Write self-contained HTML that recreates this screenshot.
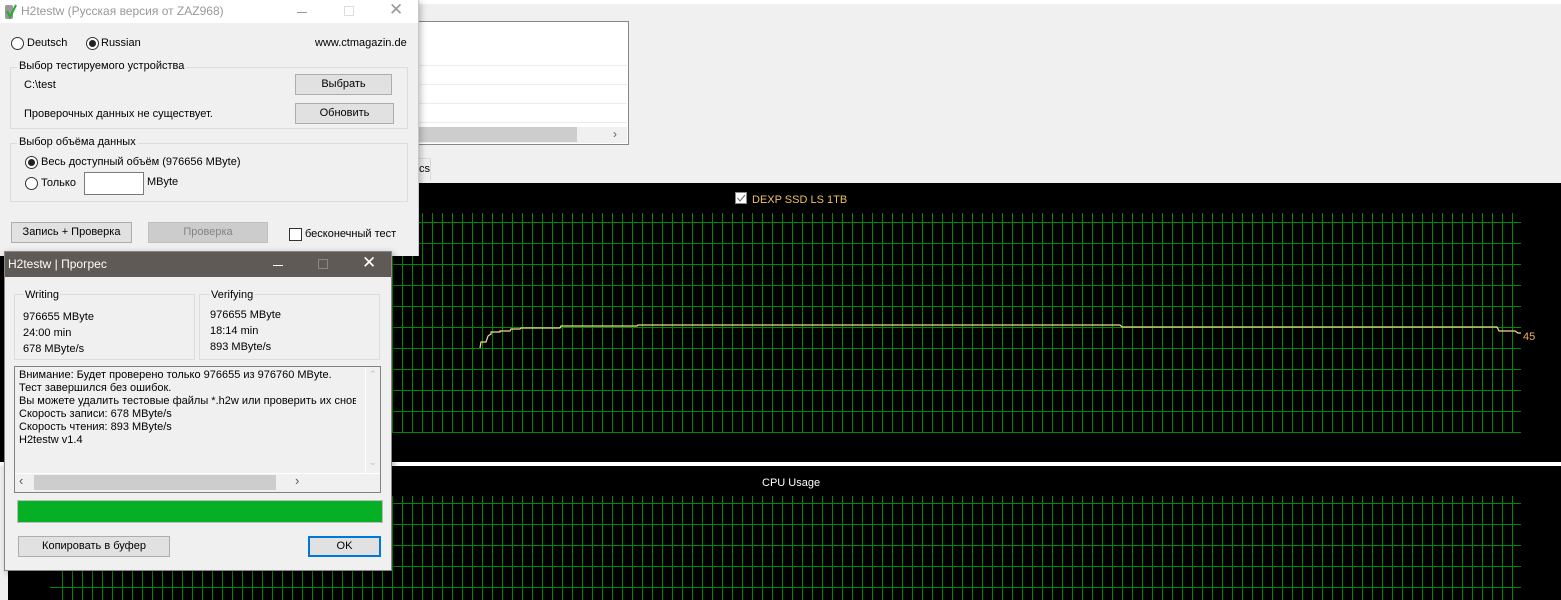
<!DOCTYPE html>
<html><head><meta charset="utf-8"><style>
*{box-sizing:border-box;margin:0;padding:0}
body{width:1561px;height:600px;overflow:hidden;position:relative;background:#f0f0f0;font-family:"Liberation Sans","DejaVu Sans",sans-serif;font-size:11px;color:#000}
.a{position:absolute}
.btn{position:absolute;background:#e1e1e1;border:1px solid #adadad;text-align:center;font-size:11px}
.grp{position:absolute;border:1px solid #dcdcdc}
.grp .t{position:absolute;top:-8px;left:6px;background:#f0f0f0;padding:0 2px}
.rad{position:absolute;width:13px;height:13px;border:1px solid #333;border-radius:50%;background:#fff}
.rad.on::after{content:"";position:absolute;left:2px;top:2px;width:7px;height:7px;border-radius:50%;background:#222}
</style></head><body>
<div class="a" style="left:0;top:0;width:1561px;height:4px;background:#fff"></div>
<!-- listbox -->
<div class="a" style="left:400px;top:21px;width:229px;height:124px;background:#fff;border:1px solid #828790"></div>
<div class="a" style="left:400px;top:65px;width:227px;height:1px;background:#ececec"></div>
<div class="a" style="left:400px;top:84px;width:227px;height:1px;background:#ececec"></div>
<div class="a" style="left:400px;top:103px;width:227px;height:1px;background:#ececec"></div>
<div class="a" style="left:400px;top:122px;width:227px;height:1px;background:#ececec"></div>
<div class="a" style="left:400px;top:127px;width:227px;height:16px;background:#f0f0f0"></div>
<div class="a" style="left:400px;top:127px;width:177px;height:15px;background:#cdcdcd"></div>
<div class="a" style="left:613px;top:127px;color:#606060;font-size:12px">&#8250;</div>
<div class="a" style="left:400px;top:158px;width:31px;height:22px;border:1px solid #d9d9d9;border-bottom:none;background:#f0f0f0;padding:4px 0 0 18px">cs</div>
<!-- charts -->
<div class="a" style="left:0;top:183px;width:1561px;height:279px;background:#000"></div>
<div class="a" style="left:0;top:462px;width:1561px;height:4px;background:#fff"></div>
<div class="a" style="left:8px;top:466px;width:1553px;height:134px;background:#000"></div>
<svg class="a" style="left:0;top:0" width="1561" height="600" shape-rendering="crispEdges">
<defs>
<pattern id="v" x="2" y="0" width="10" height="600" patternUnits="userSpaceOnUse"><rect x="0" y="0" width="1" height="600" fill="#008a00"/></pattern>
<pattern id="h1" x="0" y="222" width="1561" height="21" patternUnits="userSpaceOnUse"><rect x="0" y="0" width="1561" height="1" fill="#008a00"/></pattern>
</defs>
<rect x="61" y="213" width="1453" height="220" fill="url(#v)"/>
<rect x="50" y="222" width="1471" height="212" fill="url(#h1)"/>
<rect x="61" y="496" width="1453" height="104" fill="url(#v)"/>
<g fill="#008a00"><rect x="50" y="503" width="1471" height="1"/><rect x="50" y="524" width="1471" height="1"/><rect x="50" y="545" width="1471" height="1"/><rect x="50" y="566" width="1471" height="1"/><rect x="50" y="587" width="1471" height="1"/></g>
<polyline shape-rendering="auto" fill="none" stroke="#ffd890" stroke-width="1.2" points="480,348 481,342 486,342 488,336 491,334 491,332 500,332 500,331 510,331 511,329 520,329 521,328 560,328 561,326 637,326 638,325 1120,325 1122,327 1497,327 1499,331 1515,331 1518,333 1521,333"/>
<text x="1523" y="340" fill="#f0b050" font-family="Liberation Sans" font-size="11">45</text>
<rect x="735.5" y="192.5" width="11" height="11" fill="#fff" stroke="#888"/>
<path shape-rendering="auto" d="M737.5 198 l2.5 3 l5 -6" stroke="#666" fill="none"/>
<text x="752" y="203" fill="#f0c060" font-family="Liberation Sans" font-size="11">DEXP SSD LS 1TB</text>
<text x="762" y="486" fill="#fff" font-family="Liberation Sans" font-size="11">CPU Usage</text>
</svg>
<!-- main dialog -->
<div class="a" style="left:0;top:0;width:419px;height:256px;background:#f0f0f0;border-right:1px solid #c8c8c8;box-shadow:2px 2px 6px rgba(0,0,0,.25)">
<div class="a" style="left:0;top:0;width:418px;height:23px;background:#fff"></div>
<svg class="a" style="left:4px;top:3px" width="14" height="17"><rect x="1" y="2" width="8" height="14" rx="2" fill="#999"/><path d="M3 8 l3 6 l6 -12" stroke="#3a3" stroke-width="2.2" fill="none"/></svg>
<div class="a" style="left:21px;top:4px;font-size:12px;color:#999">H2testw (Русская версия от ZAZ968)</div>
<div class="a" style="left:297px;top:12px;width:10px;height:1px;background:#999"></div>
<div class="a" style="left:344px;top:6px;width:10px;height:10px;border:1px solid #ddd"></div>
<div class="a" style="left:389px;top:0px;font-size:17px;color:#999;font-weight:100">&#x2715;</div>
<div class="rad" style="left:11px;top:37px"></div><div class="a" style="left:27px;top:37px">Deutsch</div>
<div class="rad on" style="left:86px;top:37px"></div><div class="a" style="left:101px;top:37px">Russian</div>
<div class="a" style="left:315px;top:37px">www.ctmagazin.de</div>
<div class="grp" style="left:10px;top:67px;width:398px;height:62px"><div class="t">Выбор тестируемого устройства</div></div>
<div class="a" style="left:24px;top:79px">C:\test</div>
<div class="a" style="left:24px;top:108px">Проверочных данных не существует.</div>
<div class="btn" style="left:295px;top:74px;width:97px;height:21px;line-height:19px">Выбрать</div>
<div class="btn" style="left:295px;top:103px;width:99px;height:21px;line-height:19px">Обновить</div>
<div class="grp" style="left:10px;top:143px;width:398px;height:59px"><div class="t">Выбор объёма данных</div></div>
<div class="rad on" style="left:25px;top:156px"></div><div class="a" style="left:41px;top:156px">Весь доступный объём (976656 MByte)</div>
<div class="rad" style="left:25px;top:177px"></div><div class="a" style="left:41px;top:177px">Только</div>
<div class="a" style="left:84px;top:172px;width:60px;height:23px;background:#fff;border:1px solid #7a7a7a"></div>
<div class="a" style="left:147px;top:176px">MByte</div>
<div class="btn" style="left:11px;top:222px;width:121px;height:21px;line-height:19px">Запись + Проверка</div>
<div class="btn" style="left:148px;top:222px;width:120px;height:21px;line-height:19px;background:#ccc;border-color:#bfbfbf;color:#838383">Проверка</div>
<div class="a" style="left:289px;top:228px;width:13px;height:13px;border:1px solid #333;background:#fff"></div>
<div class="a" style="left:305px;top:228px">бесконечный тест</div>
</div>
<!-- progress dialog -->
<div class="a" style="left:4px;top:251px;width:388px;height:320px;background:#f0f0f0;border:1px solid #888;box-shadow:2px 2px 6px rgba(0,0,0,.3)">
<div class="a" style="left:0;top:0;width:386px;height:25px;background:#5f5a56"></div>
<div class="a" style="left:3px;top:5px;font-size:12px;color:#fff">H2testw | Прогрес</div>
<div class="a" style="left:268px;top:13px;width:10px;height:1px;background:#fff"></div>
<div class="a" style="left:313px;top:7px;width:10px;height:10px;border:1px solid #888"></div>
<div class="a" style="left:357px;top:1px;font-size:17px;color:#fff">&#x2715;</div>
<div class="grp" style="left:9px;top:42px;width:181px;height:66px"></div>
<div class="a" style="left:19px;top:37px;background:#f0f0f0;padding:0 1px">Writing</div>
<div class="a" style="left:18px;top:57px;line-height:16px">976655 MByte<br>24:00 min<br>678 MByte/s</div>
<div class="grp" style="left:194px;top:42px;width:181px;height:66px"></div>
<div class="a" style="left:205px;top:37px;background:#f0f0f0;padding:0 1px">Verifying</div>
<div class="a" style="left:205px;top:55px;line-height:16px">976655 MByte<br>18:14 min<br>893 MByte/s</div>
<div class="a" style="left:9px;top:114px;width:367px;height:127px;border:1px solid #828282;background:#f0f0f0;overflow:hidden">
<div class="a" style="left:4px;top:2px;width:337px;line-height:13px;white-space:nowrap;overflow:hidden">Внимание: Будет проверено только 976655 из 976760 MByte.<br>Тест завершился без ошибок.<br>Вы можете удалить тестовые файлы *.h2w или проверить их снова<br>Скорость записи: 678 MByte/s<br>Скорость чтения: 893 MByte/s<br>H2testw v1.4</div>
<div class="a" style="left:0;top:106px;width:365px;height:19px;background:#f0f0f0;border-top:1px solid #fff"></div>
<div class="a" style="left:19px;top:108px;width:242px;height:15px;background:#cdcdcd"></div>
<div class="a" style="left:4px;top:106px;font-size:13px;color:#555">&#8249;</div>
<div class="a" style="left:280px;top:106px;font-size:13px;color:#555">&#8250;</div>
<div class="a" style="left:350px;top:0;width:1px;height:106px;background:#fff"></div>
<div class="a" style="left:354px;top:2px;font-size:9px;color:#bbb">&#8963;</div>
<div class="a" style="left:354px;top:90px;font-size:9px;color:#bbb">&#8964;</div>
</div>
<div class="a" style="left:12px;top:248px;width:366px;height:23px;background:#06b025;border:1px solid #bcbcbc"></div>
<div class="btn" style="left:13px;top:284px;width:152px;height:21px;line-height:19px">Копировать в буфер</div>
<div class="btn" style="left:303px;top:284px;width:73px;height:21px;line-height:17px;border:2px solid #0078d7">OK</div>
</div>
</body></html>
